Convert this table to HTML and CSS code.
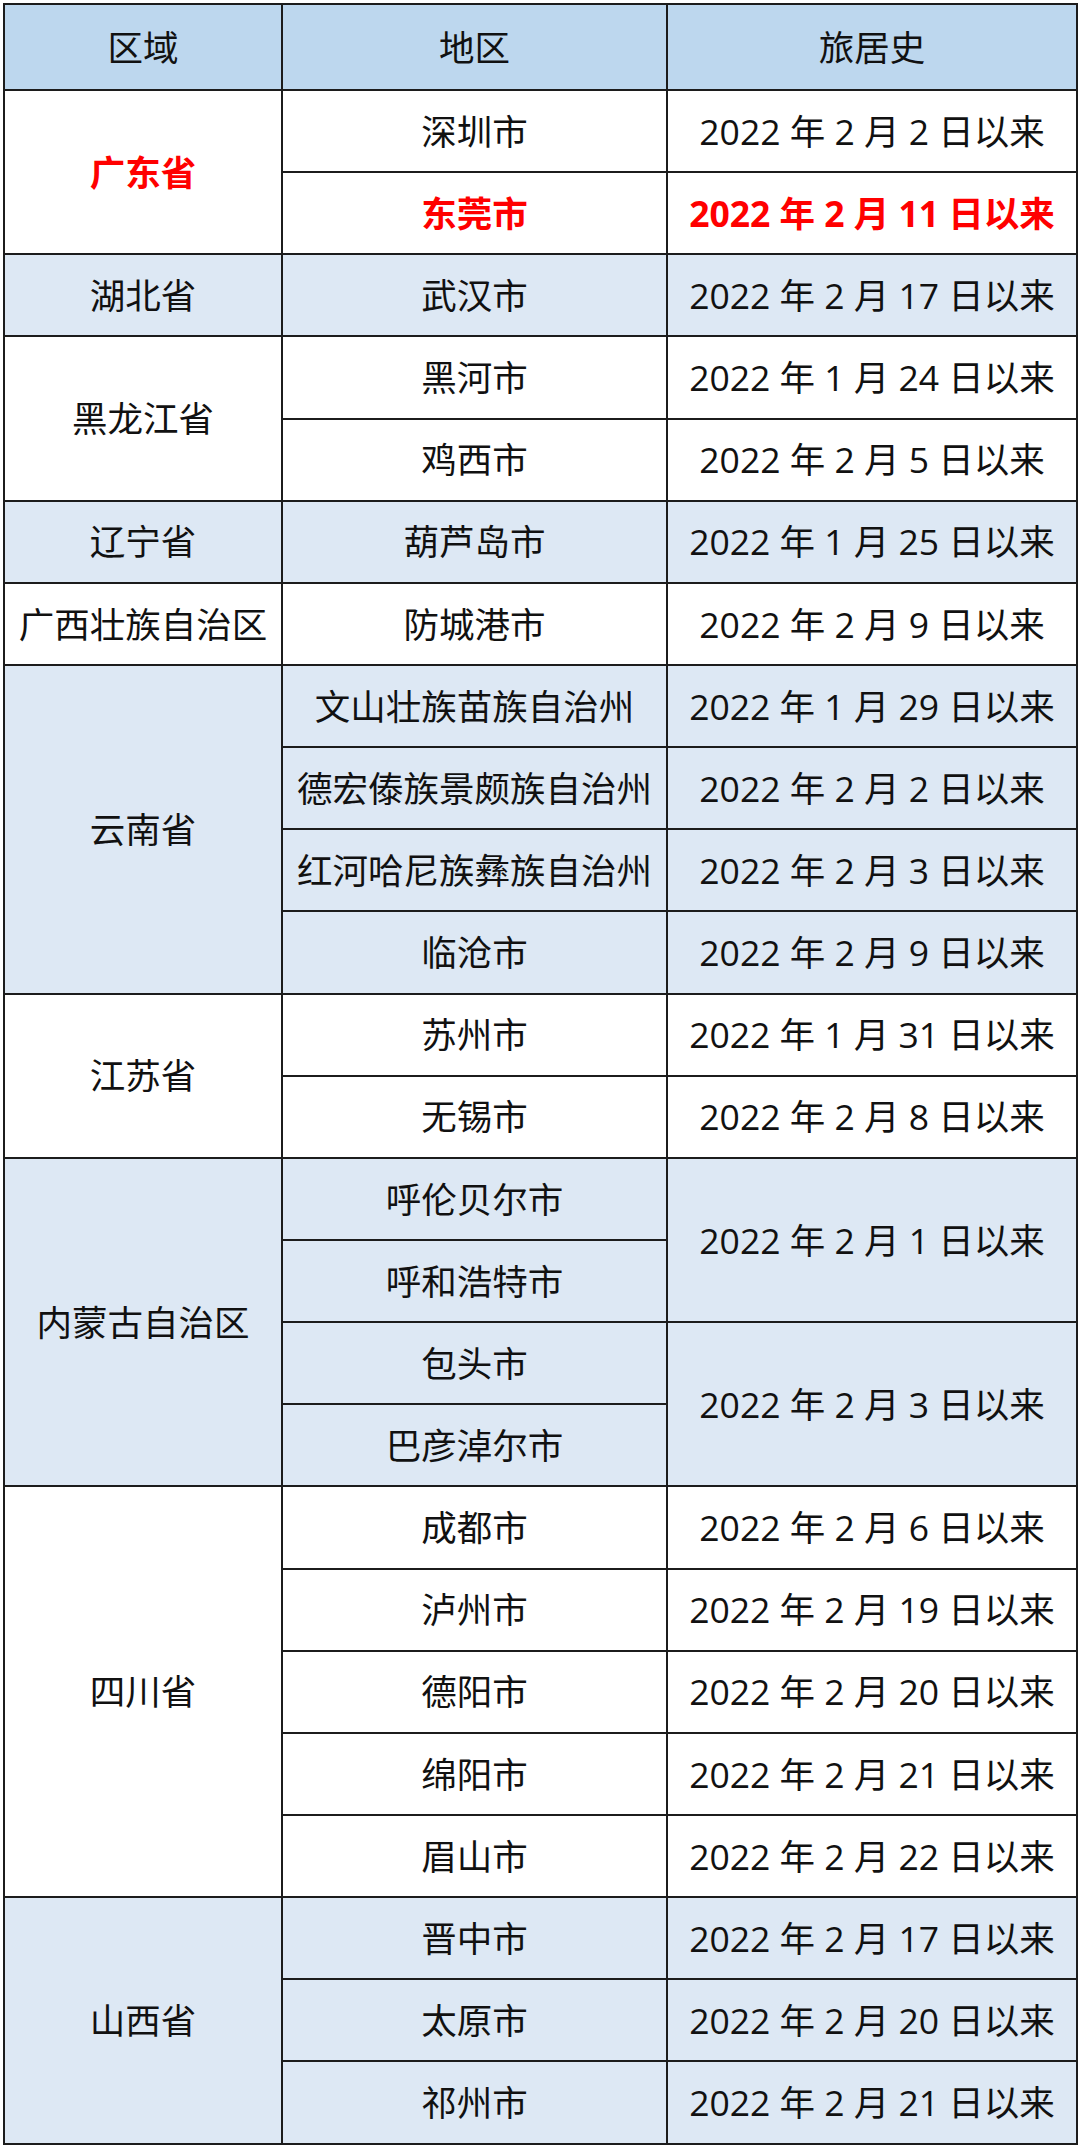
FILE: index.html
```html
<!DOCTYPE html>
<html lang="zh-CN">
<head>
<meta charset="utf-8">
<link rel="stylesheet" href="styles.css">
</head>
<body>
<table class="tbl">
  <colgroup><col class="c1"><col class="c2"><col class="c3"></colgroup>
  <thead>
    <tr class="head"><th>区域</th><th>地区</th><th>旅居史</th></tr>
  </thead>
  <tbody class="w">
    <tr><td rowspan="2" class="red">广东省</td><td>深圳市</td><td>2022 年 2 月 2 日以来</td></tr>
    <tr><td class="red">东莞市</td><td class="red">2022 年 2 月 11 日以来</td></tr>
  </tbody>
  <tbody class="b">
    <tr><td>湖北省</td><td>武汉市</td><td>2022 年 2 月 17 日以来</td></tr>
  </tbody>
  <tbody class="w">
    <tr><td rowspan="2">黑龙江省</td><td>黑河市</td><td>2022 年 1 月 24 日以来</td></tr>
    <tr><td>鸡西市</td><td>2022 年 2 月 5 日以来</td></tr>
  </tbody>
  <tbody class="b">
    <tr><td>辽宁省</td><td>葫芦岛市</td><td>2022 年 1 月 25 日以来</td></tr>
  </tbody>
  <tbody class="w">
    <tr><td>广西壮族自治区</td><td>防城港市</td><td>2022 年 2 月 9 日以来</td></tr>
  </tbody>
  <tbody class="b">
    <tr><td rowspan="4">云南省</td><td>文山壮族苗族自治州</td><td>2022 年 1 月 29 日以来</td></tr>
    <tr><td>德宏傣族景颇族自治州</td><td>2022 年 2 月 2 日以来</td></tr>
    <tr><td>红河哈尼族彝族自治州</td><td>2022 年 2 月 3 日以来</td></tr>
    <tr><td>临沧市</td><td>2022 年 2 月 9 日以来</td></tr>
  </tbody>
  <tbody class="w">
    <tr><td rowspan="2">江苏省</td><td>苏州市</td><td>2022 年 1 月 31 日以来</td></tr>
    <tr><td>无锡市</td><td>2022 年 2 月 8 日以来</td></tr>
  </tbody>
  <tbody class="b">
    <tr><td rowspan="4">内蒙古自治区</td><td>呼伦贝尔市</td><td rowspan="2">2022 年 2 月 1 日以来</td></tr>
    <tr><td>呼和浩特市</td></tr>
    <tr><td>包头市</td><td rowspan="2">2022 年 2 月 3 日以来</td></tr>
    <tr><td>巴彦淖尔市</td></tr>
  </tbody>
  <tbody class="w">
    <tr><td rowspan="5">四川省</td><td>成都市</td><td>2022 年 2 月 6 日以来</td></tr>
    <tr><td>泸州市</td><td>2022 年 2 月 19 日以来</td></tr>
    <tr><td>德阳市</td><td>2022 年 2 月 20 日以来</td></tr>
    <tr><td>绵阳市</td><td>2022 年 2 月 21 日以来</td></tr>
    <tr><td>眉山市</td><td>2022 年 2 月 22 日以来</td></tr>
  </tbody>
  <tbody class="b">
    <tr><td rowspan="3">山西省</td><td>晋中市</td><td>2022 年 2 月 17 日以来</td></tr>
    <tr><td>太原市</td><td>2022 年 2 月 20 日以来</td></tr>
    <tr><td>祁州市</td><td>2022 年 2 月 21 日以来</td></tr>
  </tbody>
</table>
</body>
</html>
```
FILE: styles.css
```css
html, body {
  margin: 0;
  padding: 0;
  background: #ffffff;
}
body {
  padding: 3px 0 0 3px;
  font-family: "Open Sans", "Noto Sans CJK SC", sans-serif;
  color: #111111;
}
.tbl {
  border-collapse: collapse;
  table-layout: fixed;
  width: 1073px;
}
.c1 { width: 278px; }
.c2 { width: 385px; }
.c3 { width: 410px; }
.tbl th, .tbl td {
  border: 2px solid #1c1c1c;
  padding: 0;
  text-align: center;
  vertical-align: middle;
  font-size: 35.5px;
  font-weight: 400;
  line-height: 1.2;
  white-space: nowrap;
}
.head {
  height: 86px;
  background: #bdd7ee;
}
.tbl tbody tr {
  height: 82.15px;
}
.w { background: #ffffff; }
.b { background: #dde8f4; }
.tbl td.red {
  color: #ff0000;
  font-weight: 700;
}
```
